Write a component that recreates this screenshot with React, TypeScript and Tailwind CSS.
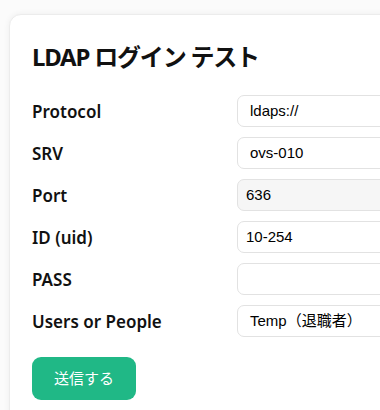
import React from 'react';

const rows = [
  { label: 'Protocol', value: 'ldaps://', kind: 'select' },
  { label: 'SRV', value: 'ovs-010', kind: 'select' },
  { label: 'Port', value: '636', kind: 'readonly' },
  { label: 'ID (uid)', value: '10-254', kind: 'input' },
  { label: 'PASS', value: '', kind: 'input' },
  { label: 'Users or People', value: 'Temp（退職者）', kind: 'select' },
];

const App = () => {
  return (
    <div className="w-[380px] h-[410px] overflow-hidden bg-[#fbfbfb] pl-[9px] pt-[14px] font-['Noto_Sans','Noto_Sans_CJK_JP',sans-serif]">
      <div className="w-[520px] h-[420px] bg-white rounded-[12px] border border-[#ececec] shadow-[0_0_6px_rgba(0,0,0,0.06)] pl-[22px] pt-[26px]">
        {/* Title */}
        <h1 className="text-[24px] font-bold text-[#111] leading-[32px] tracking-[-1.2px]">
          LDAP ログイン テスト
        </h1>

        {/* Form */}
        <div className="mt-[22px] flex flex-col gap-[10px]">
          {rows.map((r) => (
            <div key={r.label} className="flex items-center">
              <div className="w-[205px] shrink-0 text-[17px] font-semibold text-[#111] leading-none">
                {r.label}
              </div>
              <div
                className={
                  r.kind === 'readonly'
                    ? 'w-[260px] h-[32px] flex items-center rounded-[7px] border border-[#e2e2e2] bg-[#f6f6f6] pl-[8px] text-[15px] text-black font-["Liberation_Sans",Arial,"Noto_Sans_CJK_JP",sans-serif]'
                    : r.kind === 'select'
                    ? 'w-[260px] h-[32px] flex items-center rounded-[7px] border border-[#e2e2e2] bg-white pl-[12px] text-[15px] text-black font-["Liberation_Sans",Arial,"Noto_Sans_CJK_JP",sans-serif]'
                    : 'w-[260px] h-[32px] flex items-center rounded-[7px] border border-[#e2e2e2] bg-white pl-[8px] text-[15px] text-black font-["Liberation_Sans",Arial,"Noto_Sans_CJK_JP",sans-serif]'
                }
              >
                {r.value}
              </div>
            </div>
          ))}
        </div>

        {/* Submit */}
        <button className="mt-[20px] h-[43px] px-[22px] rounded-[9px] bg-[#20b886] text-white text-[15px] font-['Noto_Sans_CJK_JP',sans-serif]">
          送信する
        </button>
      </div>
    </div>
  );
};

export default App;
